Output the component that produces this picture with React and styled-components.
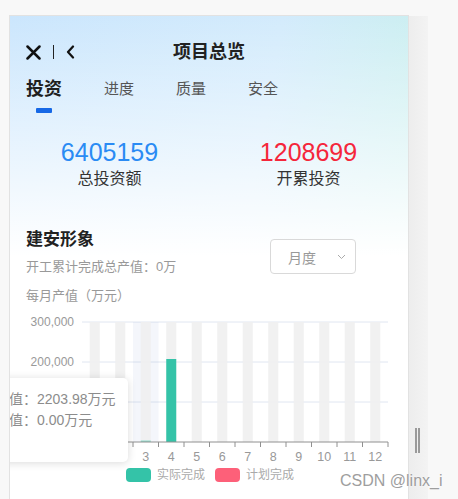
import React from "react";
import styled, { createGlobalStyle } from "styled-components";

const GlobalStyle = createGlobalStyle`
  html, body {
    margin: 0;
    padding: 0;
    overflow: hidden;
    background: #f8f8f8;
    font-family: "Liberation Sans", "Noto Sans CJK SC", sans-serif;
  }
`;

const tabs = ["投资", "进度", "质量", "安全"];
const months = ["1", "2", "3", "4", "5", "6", "7", "8", "9", "10", "11", "12"];
// only the labels not covered by the tooltip
const yTicks = [
  { label: "300,000", y: 16 },
  { label: "200,000", y: 56 },
];
const gridY = [16, 56, 96];

const Page = styled.div`
  position: relative;
  display: flex;
  align-items: flex-start;
  padding: 15px 0 0 9px;
  height: 499px;
  box-sizing: border-box;
`;

const Phone = styled.div`
  position: relative;
  width: 400px;
  height: 560px;
  box-sizing: border-box;
  border: 1px solid #e2e2e2;
  overflow: hidden;
  background: linear-gradient(to bottom, rgba(255, 255, 255, 0) 0, #fff 240px),
    linear-gradient(100deg, #cbe6fd 0%, #d3ebfc 55%, #c7f1ea 100%);
`;

const Side = styled.div`
  position: relative;
  width: 19px;
  height: 490px;
  margin-top: 1px;
  background: linear-gradient(to right, #ededed, #f3f3f3);
`;

const Handle = styled.div`
  position: absolute;
  left: 6px;
  top: 412px;
  width: 5px;
  height: 25px;
  border-left: 2px solid #9a9a9a;
  border-right: 2px solid #9a9a9a;
  box-sizing: border-box;
`;

const Header = styled.div`
  position: relative;
  display: flex;
  align-items: center;
  justify-content: center;
  height: 44px;
  margin-top: 14px;
`;

const NavIcons = styled.div`
  position: absolute;
  left: 16px;
  top: 0;
  height: 44px;
  display: flex;
  align-items: center;
  gap: 12px;
`;

const Divider = styled.span`
  width: 1px;
  height: 14px;
  background: #222;
`;

const Title = styled.h1`
  margin: 0;
  font-size: 18px;
  font-weight: 700;
  color: #222;
  line-height: 24px;
`;

const TabRow = styled.div`
  display: flex;
  gap: 42px;
  padding: 3px 0 0 16px;
`;

const Tab = styled.div`
  display: flex;
  flex-direction: column;
  align-items: center;
  font-size: ${({ $active }) => ($active ? "18px" : "15px")};
  font-weight: ${({ $active }) => ($active ? 700 : 400)};
  color: ${({ $active }) => ($active ? "#1f1f1f" : "#555")};
  line-height: 24px;

  &::after {
    content: "";
    width: 16px;
    height: 5px;
    margin-top: 7px;
    border-radius: 1px;
    background: ${({ $active }) => ($active ? "#1668e6" : "transparent")};
  }
`;

const Stats = styled.div`
  display: grid;
  grid-template-columns: 1fr 1fr;
  margin-top: 24px;
`;

const Stat = styled.div`
  display: flex;
  flex-direction: column;
  align-items: center;
`;

const StatValue = styled.div`
  font-size: 25px;
  line-height: 30px;
  color: ${({ $color }) => $color};
`;

const StatLabel = styled.div`
  margin-top: 1px;
  font-size: 16px;
  line-height: 22px;
  color: #333;
`;

const Section = styled.div`
  margin-top: 38px;
  padding: 0 52px 0 16px;
`;

const SectionHead = styled.div`
  display: flex;
  justify-content: space-between;
  align-items: flex-start;
`;

const SectionTitle = styled.div`
  font-size: 17px;
  font-weight: 700;
  color: #222;
  line-height: 24px;
`;

const Muted = styled.div`
  margin-top: ${({ $gap }) => $gap}px;
  font-size: 13px;
  line-height: 20px;
  color: #999;
`;

const Select = styled.div`
  display: flex;
  align-items: center;
  justify-content: space-between;
  width: 86px;
  height: 35px;
  margin-top: 11px;
  padding: 0 9px 0 17px;
  box-sizing: border-box;
  border: 1px solid #d9d9d9;
  border-radius: 4px;
  background: #fff;
  font-size: 14px;
  color: #999;
`;

const Chart = styled.svg`
  display: block;
  width: 398px;
  height: 160px;
`;

const Legend = styled.div`
  display: flex;
  gap: 10px;
  margin: 1px 0 0 116px;
`;

const LegendItem = styled.div`
  display: flex;
  align-items: center;
  gap: 6px;
  font-size: 12px;
  line-height: 16px;
  color: #aaa;

  &::before {
    content: "";
    width: 25px;
    height: 14px;
    border-radius: 4px;
    background: ${({ $color }) => $color};
  }
`;

const Tooltip = styled.div`
  position: absolute;
  left: -53px;
  top: 362px;
  width: 171px;
  height: 84px;
  box-sizing: border-box;
  padding: 11px 0 0 10px;
  background: #fff;
  border-radius: 5px;
  box-shadow: 0 1px 8px rgba(0, 0, 0, 0.15);
  font-size: 14px;
  line-height: 21px;
  color: #8c8c8c;
  white-space: nowrap;
`;

const Watermark = styled.div`
  position: absolute;
  left: 340px;
  top: 472px;
  font-size: 16px;
  line-height: 18px;
  color: #9e9e9e;
  text-shadow: 0 0 2px #fff;
`;

function CloseIcon() {
  return (
    <svg width="15" height="15" viewBox="0 0 15 15">
      <path d="M1.5 1.5 L13.5 13.5 M13.5 1.5 L1.5 13.5" stroke="#111" strokeWidth="2.5" strokeLinecap="round" />
    </svg>
  );
}

function BackIcon() {
  return (
    <svg width="9" height="14" viewBox="0 0 9 14">
      <path d="M7 1.5 L2 7 L7 12.5" stroke="#111" strokeWidth="2.2" fill="none" strokeLinecap="round" strokeLinejoin="round" />
    </svg>
  );
}

function Chevron() {
  return (
    <svg width="9" height="6" viewBox="0 0 9 6">
      <path d="M1 1 L4.5 4.5 L8 1" stroke="#aaa" strokeWidth="1" fill="none" />
    </svg>
  );
}

function MonthChart() {
  const left = 72;
  const band = 25.5;
  const center = (i) => left + band * (i + 0.5);

  return (
    <Chart viewBox="0 0 398 160">
      {gridY.map((y) => (
        <line key={"g" + y} x1={left} x2={378} y1={y} y2={y} stroke="#e0e6f1" strokeWidth="1" />
      ))}
      {yTicks.map((t) => (
        <text key={t.label} x="64" y={t.y + 4} textAnchor="end" fontSize="12" fill="#999">
          {t.label}
        </text>
      ))}
      <rect x={left + band * 2} y="16" width={band} height="120" fill="rgba(150,170,215,0.1)" />
      {months.map((m, i) => (
        <rect key={"bg" + m} x={center(i) - 5} y="16" width="10" height="120" fill="#efefef" opacity="0.9" />
      ))}
      <rect x={center(2) - 5} y="134.5" width="10" height="1.5" fill="#8fdccc" />
      <rect x={center(3) - 5} y="53" width="10" height="83" fill="#34c3a8" />
      <line x1={left} x2={378} y1="136" y2="136" stroke="#909090" strokeWidth="1" />
      {Array.from({ length: 13 }).map((_, i) => (
        <line key={"t" + i} x1={left + band * i} x2={left + band * i} y1="136" y2="141" stroke="#909090" strokeWidth="1" />
      ))}
      {months.map((m, i) => (
        <text key={"x" + m} x={center(i)} y="155" textAnchor="middle" fontSize="12.5" fill="#999">
          {m}
        </text>
      ))}
    </Chart>
  );
}

export default function App() {
  return (
    <>
      <GlobalStyle />
      <Page>
        <Phone>
          <Header>
            <NavIcons>
              <CloseIcon />
              <Divider />
              <BackIcon />
            </NavIcons>
            <Title>项目总览</Title>
          </Header>

          <TabRow>
            {tabs.map((t, i) => (
              <Tab key={t} $active={i === 0}>
                {t}
              </Tab>
            ))}
          </TabRow>

          <Stats>
            <Stat>
              <StatValue $color="#2a8bf4">6405159</StatValue>
              <StatLabel>总投资额</StatLabel>
            </Stat>
            <Stat>
              <StatValue $color="#f5263b">1208699</StatValue>
              <StatLabel>开累投资</StatLabel>
            </Stat>
          </Stats>

          <Section>
            <SectionHead>
              <div>
                <SectionTitle>建安形象</SectionTitle>
                <Muted $gap={5}>开工累计完成总产值：0万</Muted>
              </div>
              <Select>
                月度
                <Chevron />
              </Select>
            </SectionHead>
            <Muted $gap={9}>每月产值（万元）</Muted>
          </Section>

          <MonthChart />

          <Legend>
            <LegendItem $color="#34c3a8">实际完成</LegendItem>
            <LegendItem $color="#fd6079">计划完成</LegendItem>
          </Legend>

          {/* tooltip runs past the panel's left edge, as in the app */}
          <Tooltip>
            <div>实际产值：2203.98万元</div>
            <div>计划产值：0.00万元</div>
          </Tooltip>
        </Phone>
        <Side>
          <Handle />
        </Side>
        <Watermark>CSDN @linx_i</Watermark>
      </Page>
    </>
  );
}
